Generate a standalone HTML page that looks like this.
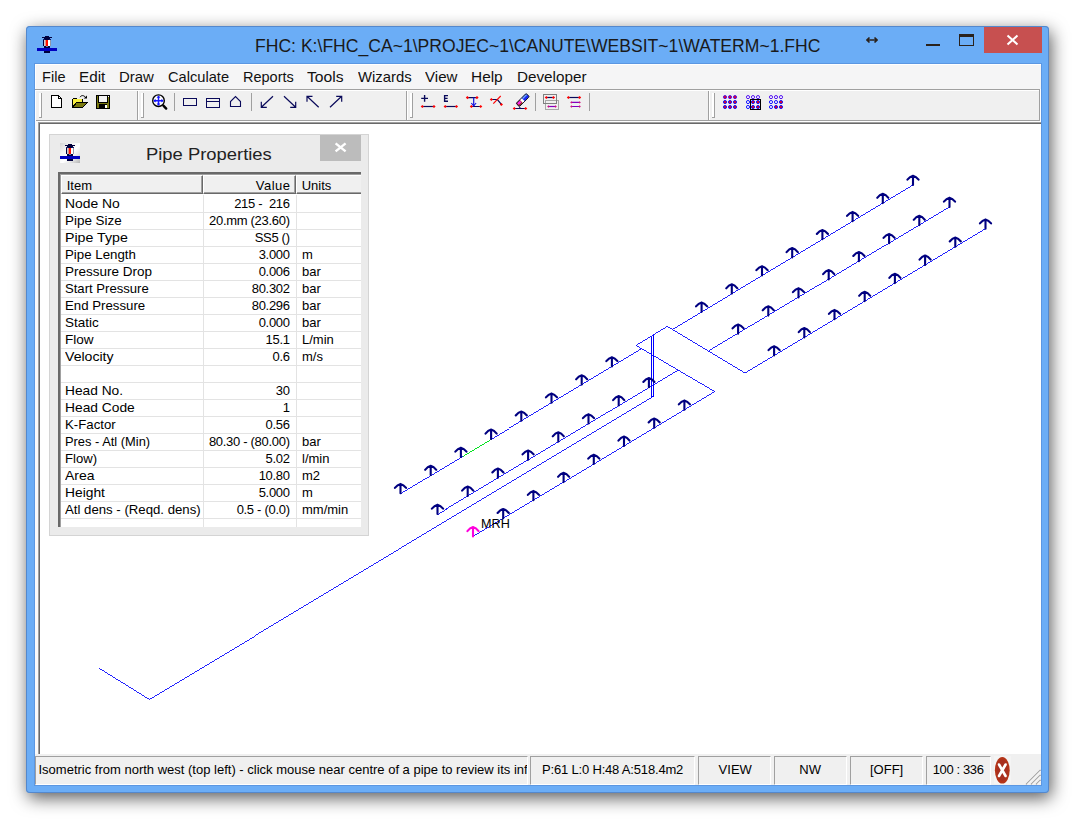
<!DOCTYPE html><html><head><meta charset='utf-8'><title>FHC</title><style>
html,body{margin:0;padding:0;}
body{width:1076px;height:820px;background:#fff;overflow:hidden;position:relative;font-family:"Liberation Sans",sans-serif;}
.a{position:absolute;}
.t{position:absolute;white-space:pre;transform-origin:0 50%;color:#000;}
#win{left:26px;top:26px;width:1023px;height:767px;background:#6BADF6;border-radius:4px;box-shadow:2px 5px 17px 0 rgba(0,0,0,0.65), 0 0 0 1px #5488cc inset;}
.sb{font-size:13px;}
.pan{position:absolute;top:756px;height:29px;border-top:1px solid #a0a0a0;border-left:1px solid #a0a0a0;border-right:1px solid #fff;border-bottom:1px solid #fff;box-sizing:border-box;}
.c{position:absolute;font-size:13px;height:17px;line-height:17px;white-space:pre;color:#000;}
</style></head><body>
<div id='win' class='a'></div><div class='a' style='left:34px;top:63px;width:1008px;height:723px;box-sizing:border-box;border:1px solid #5b97e2'></div>
<svg class='a' style='left:37px;top:36px' width='20' height='17' viewBox='0 0 20 17' shape-rendering='crispEdges'>
<rect x='8' y='0' width='4' height='1' fill='#00003c'/>
<rect x='5' y='1' width='10' height='1' fill='#00003c'/>
<rect x='7' y='2' width='6' height='1' fill='#00003c'/>
<rect x='8' y='3' width='4' height='1' fill='#00003c'/>
<rect x='6' y='3' width='2' height='1' fill='#101868'/><rect x='12' y='3' width='2' height='1' fill='#101868'/>
<rect x='6' y='4' width='1' height='6' fill='#00003c'/>
<rect x='7' y='4' width='1' height='6' fill='#c8ccd8'/>
<rect x='8' y='4' width='1' height='6' fill='#e89080'/>
<rect x='9' y='4' width='2' height='6' fill='#ff1000'/>
<rect x='11' y='4' width='2' height='6' fill='#ffffff'/>
<rect x='13' y='4' width='1' height='6' fill='#9098a8'/>
<rect x='7' y='10' width='6' height='2' fill='#00003c'/>
<rect x='9' y='10' width='2' height='1' fill='#6080c0'/>
<rect x='0' y='12' width='20' height='3' fill='#0000c0'/>
<rect x='7' y='15' width='6' height='2' fill='#00003c'/>
</svg>
<div class='t' style='left:255.3px;top:31px;height:30px;line-height:30px;font-size:17.6px;transform:scaleX(0.999);color:#1a1a1a;'>FHC: K:\FHC_CA~1\PROJEC~1\CANUTE\WEBSIT~1\WATERM~1.FHC</div>
<svg class='a' style='left:866px;top:35px' width='12' height='10' viewBox='0 0 12 10'>
<path d='M1 5H11M3.5 2.5L1 5L3.5 7.5M8.5 2.5L11 5L8.5 7.5' stroke='#2a221c' stroke-width='1.6' fill='none'/></svg>
<div class='a' style='left:926px;top:44px;width:14px;height:2px;background:#2a221c'></div>
<div class='a' style='left:959px;top:34px;width:15px;height:12px;box-sizing:border-box;border:1px solid #2a221c;border-top:3px solid #2a221c'></div>
<div class='a' style='left:984px;top:27px;width:58px;height:26px;background:#C75050'></div>
<svg class='a' style='left:1006px;top:34px' width='13' height='12' viewBox='0 0 13 12'>
<path d='M1.5 1.5L11.5 10.5M11.5 1.5L1.5 10.5' stroke='#fff' stroke-width='2.0' fill='none'/></svg>
<div class='a' style='left:35px;top:64px;width:1006px;height:25px;background:#f5f5f6;box-sizing:border-box;border-left:1px solid #fff;border-top:1px solid #fff'></div>
<div class='t' style='left:41.5px;top:65.3px;height:25px;line-height:25px;font-size:14.6px;transform:scaleX(0.999);color:#111;'>File</div>
<div class='t' style='left:78.6px;top:65.3px;height:25px;line-height:25px;font-size:14.6px;transform:scaleX(1.045);color:#111;'>Edit</div>
<div class='t' style='left:118.8px;top:65.3px;height:25px;line-height:25px;font-size:14.6px;transform:scaleX(1.025);color:#111;'>Draw</div>
<div class='t' style='left:167.6px;top:65.3px;height:25px;line-height:25px;font-size:14.6px;transform:scaleX(1.004);color:#111;'>Calculate</div>
<div class='t' style='left:242.8px;top:65.3px;height:25px;line-height:25px;font-size:14.6px;transform:scaleX(0.994);color:#111;'>Reports</div>
<div class='t' style='left:307.4px;top:65.3px;height:25px;line-height:25px;font-size:14.6px;transform:scaleX(1.074);color:#111;'>Tools</div>
<div class='t' style='left:357.5px;top:65.3px;height:25px;line-height:25px;font-size:14.6px;transform:scaleX(1.019);color:#111;'>Wizards</div>
<div class='t' style='left:424.5px;top:65.3px;height:25px;line-height:25px;font-size:14.6px;transform:scaleX(1.033);color:#111;'>View</div>
<div class='t' style='left:470.5px;top:65.3px;height:25px;line-height:25px;font-size:14.6px;transform:scaleX(1.056);color:#111;'>Help</div>
<div class='t' style='left:516.5px;top:65.3px;height:25px;line-height:25px;font-size:14.6px;transform:scaleX(1.045);color:#111;'>Developer</div>
<div class='a' style='left:35px;top:89px;width:1006px;height:35px;background:#f0f0f0'></div>
<div class='a' style='left:35px;top:89px;width:1006px;height:1px;background:#a0a0a0'></div>
<div class='a' style='left:35px;top:90px;width:1006px;height:1px;background:#fff'></div>
<div class='a' style='left:35px;top:120px;width:1005px;height:1px;background:#a0a0a0'></div>
<div class='a' style='left:35px;top:121px;width:1006px;height:1px;background:#fff'></div>
<div class='a' style='left:35px;top:90px;width:1px;height:31px;background:#fff'></div>
<div class='a' style='left:1039px;top:90px;width:1px;height:31px;background:#a0a0a0'></div>
<div class='a' style='left:1040px;top:89px;width:1px;height:33px;background:#fff'></div>
<div class='a' style='left:39px;top:93px;width:2px;height:24px;background:#fff'></div><div class='a' style='left:41px;top:93px;width:1px;height:25px;background:#a0a0a0'></div><div class='a' style='left:39px;top:117px;width:3px;height:1px;background:#a0a0a0'></div>
<div class='a' style='left:141px;top:93px;width:2px;height:24px;background:#fff'></div><div class='a' style='left:143px;top:93px;width:1px;height:25px;background:#a0a0a0'></div><div class='a' style='left:141px;top:117px;width:3px;height:1px;background:#a0a0a0'></div>
<div class='a' style='left:410px;top:93px;width:2px;height:24px;background:#fff'></div><div class='a' style='left:412px;top:93px;width:1px;height:25px;background:#a0a0a0'></div><div class='a' style='left:410px;top:117px;width:3px;height:1px;background:#a0a0a0'></div>
<div class='a' style='left:712px;top:93px;width:2px;height:24px;background:#fff'></div><div class='a' style='left:714px;top:93px;width:1px;height:25px;background:#a0a0a0'></div><div class='a' style='left:712px;top:117px;width:3px;height:1px;background:#a0a0a0'></div>
<div class='a' style='left:137px;top:91px;width:1px;height:29px;background:#a0a0a0'></div><div class='a' style='left:138px;top:91px;width:1px;height:29px;background:#fff'></div>
<div class='a' style='left:406px;top:91px;width:1px;height:29px;background:#a0a0a0'></div><div class='a' style='left:407px;top:91px;width:1px;height:29px;background:#fff'></div>
<div class='a' style='left:708px;top:91px;width:1px;height:29px;background:#a0a0a0'></div><div class='a' style='left:709px;top:91px;width:1px;height:29px;background:#fff'></div>
<div class='a' style='left:174px;top:93px;width:1px;height:18px;background:#a0a0a0'></div>
<div class='a' style='left:251px;top:93px;width:1px;height:18px;background:#a0a0a0'></div>
<div class='a' style='left:535px;top:93px;width:1px;height:18px;background:#a0a0a0'></div>
<div class='a' style='left:589px;top:93px;width:1px;height:18px;background:#a0a0a0'></div>
<svg class='a' style='left:0;top:0' width='1076' height='125' viewBox='0 0 1076 125'>
<path d='M51.5 95.5H58.5L61.5 98.5V107.5H51.5Z' fill='#fff' stroke='#000' stroke-width='1' shape-rendering='crispEdges'/><path d='M58.5 95.5V98.5H61.5' fill='none' stroke='#000' stroke-width='1' shape-rendering='crispEdges'/>
<g shape-rendering='crispEdges'><path d='M72.5 107.5V99.5L73.5 98.5H76.5L77.5 99.5H82.5V102.5' fill='#f4f060' stroke='#000'/><path d='M73 99H82V102H76L73 107Z' fill='#f8f040'/><path d='M72.5 107.5L76.5 102.5H87.5L82.5 107.5Z' fill='#7a7a10' stroke='#000'/></g><path d='M80 97.2C81.2 95 84 95 85.6 97.6' fill='none' stroke='#000' stroke-width='1'/><path d='M83.6 98.6H87V95.4Z' fill='#000'/>
<g shape-rendering='crispEdges'><rect x='96' y='95' width='14' height='14' fill='#000'/><rect x='97' y='96' width='12' height='12' fill='#7a7a10'/><rect x='99' y='96' width='8' height='6' fill='#f4f4f4'/><rect x='98' y='95' width='1' height='8' fill='#000'/><rect x='107' y='96' width='1' height='7' fill='#000'/><rect x='99' y='102' width='8' height='1' fill='#000'/><rect x='99' y='104' width='8' height='5' fill='#000'/><rect x='105' y='105' width='2' height='3' fill='#fff'/><rect x='108' y='96' width='1' height='1' fill='#fff'/></g>
<circle cx='158.5' cy='100.7' r='5.8' fill='#fff' stroke='#000' stroke-width='1.4'/><path d='M154 100.7H163M158.5 96.2V105.2' stroke='#1818ff' stroke-width='1.5' fill='none'/><path d='M153.4 100.7L155.6 98.8V102.6ZM163.6 100.7L161.4 98.8V102.6ZM158.5 95.6L156.6 97.8H160.4ZM158.5 105.8L156.6 103.6H160.4Z' fill='#1010ff'/><path d='M163.4 105.6L166.2 108.6' stroke='#000' stroke-width='2.4' stroke-linecap='round'/>
<g shape-rendering='crispEdges' fill='none' stroke='#0a0a5a' stroke-width='1'><rect x='183.5' y='98.5' width='13' height='7'/><rect x='206.5' y='98.5' width='13' height='9'/><path d='M206.5 101.5H219.5'/></g><path d='M230.5 106.5V101.6L235.5 96.6L240.5 101.6V106.5Z' fill='none' stroke='#0a0a5a' stroke-width='1.1'/>
<path d='M273 96.3L261.3 107.3M266.8 107.3H261.3V101.8' fill='none' stroke='#0a0a5a' stroke-width='1.2'/>
<path d='M284 96.3L295.7 107.3M290.2 107.3H295.7V101.8' fill='none' stroke='#0a0a5a' stroke-width='1.2'/>
<path d='M318.7 107.3L307 96.3M312.5 96.3H307V101.8' fill='none' stroke='#0a0a5a' stroke-width='1.2'/>
<path d='M330 107.3L341.7 96.3M336.2 96.3H341.7V101.8' fill='none' stroke='#0a0a5a' stroke-width='1.2'/>
<path d='M421.2 98.4H428M424.6 95V101.8' stroke='#0a0a5a' stroke-width='1.4' fill='none'/><path d='M422.4 106.5H434' stroke='#0a0a5a' stroke-width='1.2'/><path d='M420.7 106.5L422.3 104.9L423.90000000000003 106.5L422.3 108.1Z' fill='#ff0000'/><path d='M432.4 106.5L434 104.9L435.6 106.5L434 108.1Z' fill='#ff0000'/>
<path d='M448 95.6H444.6V101.2H448M444.6 98.4H447.6' stroke='#0a0a5a' stroke-width='1.35' fill='none'/><path d='M445.2 106.5H456.4' stroke='#0a0a5a' stroke-width='1.2'/><path d='M443.59999999999997 106.5L445.2 104.9L446.8 106.5L445.2 108.1Z' fill='#ff0000'/><path d='M454.9 106.5L456.5 104.9L458.1 106.5L456.5 108.1Z' fill='#ff0000'/>
<path d='M467.5 97.6H477M471.5 106.5H480.7' stroke='#0a0a5a' stroke-width='1.2'/><path d='M473.7 97.6V106' stroke='#1010e0' stroke-width='1.2'/><path d='M471.3 103L473.7 105.8L476.1 103' stroke='#1010e0' stroke-width='1.1' fill='none'/><path d='M465.79999999999995 97.6L467.4 96.0L469.0 97.6L467.4 99.19999999999999Z' fill='#ff0000'/><path d='M475.4 97.6L477 96.0L478.6 97.6L477 99.19999999999999Z' fill='#ff0000'/><path d='M469.79999999999995 106.5L471.4 104.9L473.0 106.5L471.4 108.1Z' fill='#ff0000'/><path d='M479.09999999999997 106.5L480.7 104.9L482.3 106.5L480.7 108.1Z' fill='#ff0000'/>
<path d='M491.3 99.5H497.4L501.4 104.4' stroke='#0a0a5a' stroke-width='1.2' fill='none'/><path d='M493.3 103.7L500.7 96' stroke='#ff0000' stroke-width='1.1'/><path d='M489.79999999999995 99.5L491.4 97.9L493.0 99.5L491.4 101.1Z' fill='#ff0000'/><path d='M499.79999999999995 104.5L501.4 102.9L503.0 104.5L501.4 106.1Z' fill='#ff0000'/>
<g transform='translate(522.9 99.9) rotate(-45)'><rect x='-7.3' y='-2.3' width='14.2' height='4.6' rx='1' fill='#1828f0'/><rect x='0.8' y='-2.3' width='6.1' height='1.9' fill='#6aa0ff'/><rect x='-7.3' y='-2.3' width='6' height='4.6' rx='1' fill='#a03028'/><rect x='-6.4' y='-1.6' width='3.6' height='2.2' fill='#ff20f0'/><rect x='-2.2' y='-2.3' width='2.6' height='4.6' fill='#fff'/><rect x='-7.3' y='-2.3' width='14.2' height='4.6' rx='1' fill='none' stroke='#101020' stroke-width='0.9'/></g><path d='M514.4 108.5H525.8M519.8 107V108.5' stroke='#0a0a5a' stroke-width='1.2'/><path d='M512.6999999999999 108.5L514.3 106.9L515.9 108.5L514.3 110.1Z' fill='#ff0000'/><path d='M524.1 108.5L525.7 106.9L527.3000000000001 108.5L525.7 110.1Z' fill='#ff0000'/>
<g shape-rendering='crispEdges' fill='none'><rect x='545.5' y='100.5' width='13' height='9' stroke='#a8a8a8'/><rect x='543.5' y='94.5' width='13' height='9' stroke='#808080'/></g><path d='M546.3 97.5H553.5' stroke='#0a0a5a' stroke-width='1.2'/><path d='M544.6999999999999 97.5L546.3 95.9L547.9 97.5L546.3 99.1Z' fill='#ff0000'/><path d='M551.9 97.5L553.5 95.9L555.1 97.5L553.5 99.1Z' fill='#ff0000'/><path d='M548.4 106.5H555.6' stroke='#8000c0' stroke-width='1.2'/><path d='M547.1999999999999 106.5L548.4 105.3L549.6 106.5L548.4 107.7Z' fill='#d01080'/><path d='M554.4 106.5L555.6 105.3L556.8000000000001 106.5L555.6 107.7Z' fill='#d01080'/>
<path d='M568.4 97.5H579.6' stroke='#0a0a5a' stroke-width='1.2'/><path d='M566.8 97.5L568.4 95.9L570.0 97.5L568.4 99.1Z' fill='#ff0000'/><path d='M578.0 97.5L579.6 95.9L581.2 97.5L579.6 99.1Z' fill='#ff0000'/><path d='M571.4 102.4H579.6M571.4 106.5H579.6' stroke='#8000c0' stroke-width='1.2'/><path d='M570.1999999999999 102.4L571.4 101.2L572.6 102.4L571.4 103.60000000000001Z' fill='#d01080'/><path d='M578.4 102.4L579.6 101.2L580.8000000000001 102.4L579.6 103.60000000000001Z' fill='#d01080'/><path d='M570.1999999999999 106.5L571.4 105.3L572.6 106.5L571.4 107.7Z' fill='#d01080'/><path d='M578.4 106.5L579.6 105.3L580.8000000000001 106.5L579.6 107.7Z' fill='#d01080'/>
<circle cx='725' cy='97.10' r='1.55' fill='#f00010' stroke='#5010f0' stroke-width='1'/><circle cx='730' cy='97.10' r='1.55' fill='#f00010' stroke='#5010f0' stroke-width='1'/><circle cx='735' cy='97.10' r='1.55' fill='#f00010' stroke='#5010f0' stroke-width='1'/><circle cx='725' cy='102.05' r='1.55' fill='#f00010' stroke='#1010ff' stroke-width='1'/><circle cx='730' cy='102.05' r='1.55' fill='#f00010' stroke='#1010ff' stroke-width='1'/><circle cx='735' cy='102.05' r='1.55' fill='#f00010' stroke='#1010ff' stroke-width='1'/><circle cx='725' cy='107.00' r='1.55' fill='#f00010' stroke='#1010ff' stroke-width='1'/><circle cx='730' cy='107.00' r='1.55' fill='#f00010' stroke='#1010ff' stroke-width='1'/><circle cx='735' cy='107.00' r='1.55' fill='#f00010' stroke='#1010ff' stroke-width='1'/>
<circle cx='748' cy='97.10' r='1.55' fill='#fff' stroke='#5010f0' stroke-width='1'/><circle cx='753' cy='97.10' r='1.55' fill='#fff' stroke='#5010f0' stroke-width='1'/><circle cx='758' cy='97.10' r='1.55' fill='#fff' stroke='#5010f0' stroke-width='1'/><circle cx='748' cy='102.05' r='1.55' fill='#fff' stroke='#1010ff' stroke-width='1'/><circle cx='753' cy='102.05' r='1.55' fill='#f00010' stroke='#1010ff' stroke-width='1'/><circle cx='758' cy='102.05' r='1.55' fill='#f00010' stroke='#1010ff' stroke-width='1'/><circle cx='748' cy='107.00' r='1.55' fill='#fff' stroke='#1010ff' stroke-width='1'/><circle cx='753' cy='107.00' r='1.55' fill='#f00010' stroke='#1010ff' stroke-width='1'/><circle cx='758' cy='107.00' r='1.55' fill='#f00010' stroke='#1010ff' stroke-width='1'/>
<rect x='750.5' y='99.5' width='10' height='10' fill='none' stroke='#000' stroke-width='1' shape-rendering='crispEdges'/>
<circle cx='771' cy='97.10' r='1.55' fill='#fff' stroke='#5010f0' stroke-width='1'/><circle cx='776' cy='97.10' r='1.55' fill='#fff' stroke='#5010f0' stroke-width='1'/><circle cx='781' cy='97.10' r='1.55' fill='#fff' stroke='#5010f0' stroke-width='1'/><circle cx='771' cy='102.05' r='1.55' fill='#fff' stroke='#1010ff' stroke-width='1'/><circle cx='776' cy='102.05' r='1.55' fill='#fff' stroke='#1010ff' stroke-width='1'/><circle cx='781' cy='102.05' r='1.55' fill='#f00010' stroke='#1010ff' stroke-width='1'/><circle cx='771' cy='107.00' r='1.55' fill='#fff' stroke='#1010ff' stroke-width='1'/><circle cx='776' cy='107.00' r='1.55' fill='#f00010' stroke='#1010ff' stroke-width='1'/><circle cx='781' cy='107.00' r='1.55' fill='#f00010' stroke='#1010ff' stroke-width='1'/>
</svg>
<div class='a' style='left:35px;top:122px;width:1006px;height:633px;background:#f0f0f0'></div>
<div class='a' style='left:38px;top:122px;width:1003px;height:632px;background:#fff;border-left:1px solid #a0a0a0;border-top:1px solid #a0a0a0;box-sizing:border-box'></div>
<div class='a' style='left:39px;top:123px;width:1002px;height:631px;background:#fff;border-left:1px solid #696969;border-top:1px solid #696969;box-sizing:border-box'></div>
<div class='a' style='left:35px;top:121px;width:3px;height:633px;background:#fafafa'></div>
<svg class='a' style='left:0;top:0' width='1076' height='820' viewBox='0 0 1076 820'>
<path d='M667.4 326.4L745.0 373.0M667.4 326.4L636.0 345.4M636.0 345.4L714.8 391.6M672.9 329.2L913.0 185.0M708.8 350.7L949.5 207.0M745.0 373.0L985.5 228.8M641.2 348.9L400.5 493.2M678.3 370.1L437.5 514.0M714.8 391.6L473.0 536.4M651.5 397.5L148.5 699.5M148.5 699.5L98.5 668.5' fill='none' stroke='#0000ff' stroke-width='0.87' shape-rendering='crispEdges'/>
<path d='M651.5 336.6L651.5 397.5M653.5 335.2L653.5 396.0M651.5 397.5L653.5 396.0' fill='none' stroke='#0000ff' stroke-width='1' shape-rendering='crispEdges'/>
<path d='M462.5 456.0L491.1 438.9' stroke='#00ff00' stroke-width='0.87' shape-rendering='crispEdges'/>
<path d='M913.0 185.0V176.2M907.4 179.7Q910.0 176.4 913.0 175.7Q916.0 176.4 918.6 179.7' fill='none' stroke='#000080' stroke-width='2.1' stroke-linecap='round' stroke-linejoin='miter'/><path d='M882.8 203.1V194.3M877.2 197.8Q879.8 194.5 882.8 193.8Q885.8 194.5 888.4 197.8' fill='none' stroke='#000080' stroke-width='2.1' stroke-linecap='round' stroke-linejoin='miter'/><path d='M852.6 221.2V212.4M847.0 215.9Q849.6 212.6 852.6 211.9Q855.6 212.6 858.2 215.9' fill='none' stroke='#000080' stroke-width='2.1' stroke-linecap='round' stroke-linejoin='miter'/><path d='M822.4 239.3V230.5M816.8 234.0Q819.4 230.7 822.4 230.0Q825.4 230.7 828.0 234.0' fill='none' stroke='#000080' stroke-width='2.1' stroke-linecap='round' stroke-linejoin='miter'/><path d='M792.2 257.4V248.6M786.6 252.1Q789.2 248.8 792.2 248.1Q795.2 248.8 797.8 252.1' fill='none' stroke='#000080' stroke-width='2.1' stroke-linecap='round' stroke-linejoin='miter'/><path d='M762.0 275.5V266.7M756.4 270.2Q759.0 266.9 762.0 266.2Q765.0 266.9 767.6 270.2' fill='none' stroke='#000080' stroke-width='2.1' stroke-linecap='round' stroke-linejoin='miter'/><path d='M731.8 293.6V284.8M726.2 288.3Q728.8 285.0 731.8 284.3Q734.8 285.0 737.4 288.3' fill='none' stroke='#000080' stroke-width='2.1' stroke-linecap='round' stroke-linejoin='miter'/><path d='M701.6 311.7V302.9M696.0 306.4Q698.6 303.1 701.6 302.4Q704.6 303.1 707.2 306.4' fill='none' stroke='#000080' stroke-width='2.1' stroke-linecap='round' stroke-linejoin='miter'/><path d='M949.5 207.0V198.2M943.9 201.7Q946.5 198.4 949.5 197.7Q952.5 198.4 955.1 201.7' fill='none' stroke='#000080' stroke-width='2.1' stroke-linecap='round' stroke-linejoin='miter'/><path d='M919.3 225.1V216.3M913.7 219.8Q916.3 216.5 919.3 215.8Q922.3 216.5 924.9 219.8' fill='none' stroke='#000080' stroke-width='2.1' stroke-linecap='round' stroke-linejoin='miter'/><path d='M889.1 243.2V234.4M883.5 237.9Q886.1 234.6 889.1 233.9Q892.1 234.6 894.7 237.9' fill='none' stroke='#000080' stroke-width='2.1' stroke-linecap='round' stroke-linejoin='miter'/><path d='M858.9 261.3V252.5M853.3 256.0Q855.9 252.7 858.9 252.0Q861.9 252.7 864.5 256.0' fill='none' stroke='#000080' stroke-width='2.1' stroke-linecap='round' stroke-linejoin='miter'/><path d='M828.7 279.4V270.6M823.1 274.1Q825.7 270.8 828.7 270.1Q831.7 270.8 834.3 274.1' fill='none' stroke='#000080' stroke-width='2.1' stroke-linecap='round' stroke-linejoin='miter'/><path d='M798.5 297.5V288.7M792.9 292.2Q795.5 288.9 798.5 288.2Q801.5 288.9 804.1 292.2' fill='none' stroke='#000080' stroke-width='2.1' stroke-linecap='round' stroke-linejoin='miter'/><path d='M768.3 315.6V306.8M762.7 310.3Q765.3 307.0 768.3 306.3Q771.3 307.0 773.9 310.3' fill='none' stroke='#000080' stroke-width='2.1' stroke-linecap='round' stroke-linejoin='miter'/><path d='M738.1 333.7V324.9M732.5 328.4Q735.1 325.1 738.1 324.4Q741.1 325.1 743.7 328.4' fill='none' stroke='#000080' stroke-width='2.1' stroke-linecap='round' stroke-linejoin='miter'/><path d='M985.5 228.8V219.9M979.9 223.4Q982.5 220.2 985.5 219.4Q988.5 220.2 991.1 223.4' fill='none' stroke='#000080' stroke-width='2.1' stroke-linecap='round' stroke-linejoin='miter'/><path d='M955.3 246.8V238.0M949.7 241.5Q952.3 238.2 955.3 237.5Q958.3 238.2 960.9 241.5' fill='none' stroke='#000080' stroke-width='2.1' stroke-linecap='round' stroke-linejoin='miter'/><path d='M925.1 264.9V256.1M919.5 259.6Q922.1 256.3 925.1 255.6Q928.1 256.3 930.7 259.6' fill='none' stroke='#000080' stroke-width='2.1' stroke-linecap='round' stroke-linejoin='miter'/><path d='M894.9 283.1V274.2M889.3 277.8Q891.9 274.4 894.9 273.8Q897.9 274.4 900.5 277.8' fill='none' stroke='#000080' stroke-width='2.1' stroke-linecap='round' stroke-linejoin='miter'/><path d='M864.7 301.1V292.3M859.1 295.8Q861.7 292.5 864.7 291.8Q867.7 292.5 870.3 295.8' fill='none' stroke='#000080' stroke-width='2.1' stroke-linecap='round' stroke-linejoin='miter'/><path d='M834.5 319.2V310.4M828.9 313.9Q831.5 310.6 834.5 309.9Q837.5 310.6 840.1 313.9' fill='none' stroke='#000080' stroke-width='2.1' stroke-linecap='round' stroke-linejoin='miter'/><path d='M804.3 337.4V328.6M798.7 332.1Q801.3 328.8 804.3 328.1Q807.3 328.8 809.9 332.1' fill='none' stroke='#000080' stroke-width='2.1' stroke-linecap='round' stroke-linejoin='miter'/><path d='M774.1 355.5V346.7M768.5 350.2Q771.1 346.9 774.1 346.2Q777.1 346.9 779.7 350.2' fill='none' stroke='#000080' stroke-width='2.1' stroke-linecap='round' stroke-linejoin='miter'/><path d='M400.5 493.2V484.4M394.9 487.9Q397.5 484.6 400.5 483.9Q403.5 484.6 406.1 487.9' fill='none' stroke='#000080' stroke-width='2.1' stroke-linecap='round' stroke-linejoin='miter'/><path d='M430.7 475.1V466.3M425.1 469.8Q427.7 466.5 430.7 465.8Q433.7 466.5 436.3 469.8' fill='none' stroke='#000080' stroke-width='2.1' stroke-linecap='round' stroke-linejoin='miter'/><path d='M460.9 457.0V448.2M455.3 451.7Q457.9 448.4 460.9 447.7Q463.9 448.4 466.5 451.7' fill='none' stroke='#000080' stroke-width='2.1' stroke-linecap='round' stroke-linejoin='miter'/><path d='M491.1 438.9V430.1M485.5 433.6Q488.1 430.3 491.1 429.6Q494.1 430.3 496.7 433.6' fill='none' stroke='#000080' stroke-width='2.1' stroke-linecap='round' stroke-linejoin='miter'/><path d='M521.3 420.8V412.0M515.7 415.5Q518.3 412.2 521.3 411.5Q524.3 412.2 526.9 415.5' fill='none' stroke='#000080' stroke-width='2.1' stroke-linecap='round' stroke-linejoin='miter'/><path d='M551.5 402.7V393.9M545.9 397.4Q548.5 394.1 551.5 393.4Q554.5 394.1 557.1 397.4' fill='none' stroke='#000080' stroke-width='2.1' stroke-linecap='round' stroke-linejoin='miter'/><path d='M581.7 384.6V375.8M576.1 379.3Q578.7 376.0 581.7 375.3Q584.7 376.0 587.3 379.3' fill='none' stroke='#000080' stroke-width='2.1' stroke-linecap='round' stroke-linejoin='miter'/><path d='M611.9 366.5V357.7M606.3 361.2Q608.9 357.9 611.9 357.2Q614.9 357.9 617.5 361.2' fill='none' stroke='#000080' stroke-width='2.1' stroke-linecap='round' stroke-linejoin='miter'/><path d='M437.5 514.0V505.2M431.9 508.7Q434.5 505.4 437.5 504.7Q440.5 505.4 443.1 508.7' fill='none' stroke='#000080' stroke-width='2.1' stroke-linecap='round' stroke-linejoin='miter'/><path d='M467.7 495.9V487.1M462.1 490.6Q464.7 487.3 467.7 486.6Q470.7 487.3 473.3 490.6' fill='none' stroke='#000080' stroke-width='2.1' stroke-linecap='round' stroke-linejoin='miter'/><path d='M497.9 477.8V469.0M492.3 472.5Q494.9 469.2 497.9 468.5Q500.9 469.2 503.5 472.5' fill='none' stroke='#000080' stroke-width='2.1' stroke-linecap='round' stroke-linejoin='miter'/><path d='M528.1 459.7V450.9M522.5 454.4Q525.1 451.1 528.1 450.4Q531.1 451.1 533.7 454.4' fill='none' stroke='#000080' stroke-width='2.1' stroke-linecap='round' stroke-linejoin='miter'/><path d='M558.3 441.6V432.8M552.7 436.3Q555.3 433.0 558.3 432.3Q561.3 433.0 563.9 436.3' fill='none' stroke='#000080' stroke-width='2.1' stroke-linecap='round' stroke-linejoin='miter'/><path d='M588.5 423.5V414.7M582.9 418.2Q585.5 414.9 588.5 414.2Q591.5 414.9 594.1 418.2' fill='none' stroke='#000080' stroke-width='2.1' stroke-linecap='round' stroke-linejoin='miter'/><path d='M618.7 405.4V396.6M613.1 400.1Q615.7 396.8 618.7 396.1Q621.7 396.8 624.3 400.1' fill='none' stroke='#000080' stroke-width='2.1' stroke-linecap='round' stroke-linejoin='miter'/><path d='M648.9 387.3V378.5M643.3 382.0Q645.9 378.7 648.9 378.0Q651.9 378.7 654.5 382.0' fill='none' stroke='#000080' stroke-width='2.1' stroke-linecap='round' stroke-linejoin='miter'/><path d='M473.0 536.4V527.6M467.4 531.1Q470.0 527.8 473.0 527.1Q476.0 527.8 478.6 531.1' fill='none' stroke='#ff00dc' stroke-width='2.1' stroke-linecap='round' stroke-linejoin='miter'/><path d='M503.2 518.3V509.5M497.6 513.0Q500.2 509.7 503.2 509.0Q506.2 509.7 508.8 513.0' fill='none' stroke='#000080' stroke-width='2.1' stroke-linecap='round' stroke-linejoin='miter'/><path d='M533.4 500.2V491.4M527.8 494.9Q530.4 491.6 533.4 490.9Q536.4 491.6 539.0 494.9' fill='none' stroke='#000080' stroke-width='2.1' stroke-linecap='round' stroke-linejoin='miter'/><path d='M563.6 482.1V473.3M558.0 476.8Q560.6 473.5 563.6 472.8Q566.6 473.5 569.2 476.8' fill='none' stroke='#000080' stroke-width='2.1' stroke-linecap='round' stroke-linejoin='miter'/><path d='M593.8 464.0V455.2M588.2 458.7Q590.8 455.4 593.8 454.7Q596.8 455.4 599.4 458.7' fill='none' stroke='#000080' stroke-width='2.1' stroke-linecap='round' stroke-linejoin='miter'/><path d='M624.0 445.9V437.1M618.4 440.6Q621.0 437.3 624.0 436.6Q627.0 437.3 629.6 440.6' fill='none' stroke='#000080' stroke-width='2.1' stroke-linecap='round' stroke-linejoin='miter'/><path d='M654.2 427.8V419.0M648.6 422.5Q651.2 419.2 654.2 418.5Q657.2 419.2 659.8 422.5' fill='none' stroke='#000080' stroke-width='2.1' stroke-linecap='round' stroke-linejoin='miter'/><path d='M684.4 409.7V400.9M678.8 404.4Q681.4 401.1 684.4 400.4Q687.4 401.1 690.0 404.4' fill='none' stroke='#000080' stroke-width='2.1' stroke-linecap='round' stroke-linejoin='miter'/>
</svg>
<div class='t' style='left:481px;top:516.1px;height:16px;line-height:16px;font-size:13.6px;transform:scaleX(0.93)'>MRH</div>
<div class='a' style='left:49px;top:134px;width:320px;height:402px;background:#ebebeb;border:1px solid #d4d4d4;box-sizing:border-box'></div>
<div class='a' style='left:60px;top:143px;width:20px;height:20px;background:linear-gradient(135deg,#d4d4d4 0%,#f4f4f4 30%,#ffffff 55%,#e4e4e4 75%,#b4b4b4 100%)'></div>
<svg class='a' style='left:60px;top:144px' width='20' height='17' viewBox='0 0 20 17' shape-rendering='crispEdges'>
<rect x='8' y='0' width='4' height='1' fill='#00003c'/>
<rect x='5' y='1' width='10' height='1' fill='#00003c'/>
<rect x='7' y='2' width='6' height='1' fill='#00003c'/>
<rect x='8' y='3' width='4' height='1' fill='#00003c'/>
<rect x='6' y='3' width='2' height='1' fill='#101868'/><rect x='12' y='3' width='2' height='1' fill='#101868'/>
<rect x='6' y='4' width='1' height='6' fill='#00003c'/>
<rect x='7' y='4' width='1' height='6' fill='#c8ccd8'/>
<rect x='8' y='4' width='1' height='6' fill='#e89080'/>
<rect x='9' y='4' width='2' height='6' fill='#ff1000'/>
<rect x='11' y='4' width='2' height='6' fill='#ffffff'/>
<rect x='13' y='4' width='1' height='6' fill='#9098a8'/>
<rect x='7' y='10' width='6' height='2' fill='#00003c'/>
<rect x='9' y='10' width='2' height='1' fill='#6080c0'/>
<rect x='0' y='12' width='20' height='3' fill='#0000c0'/>
<rect x='7' y='15' width='6' height='2' fill='#00003c'/>
</svg>
<div class='t' id='pp' style='left:146.2px;top:140px;height:28px;line-height:28px;font-size:17.4px;color:#222;transform:scaleX(1.058)'>Pipe Properties</div>
<div class='a' style='left:320px;top:135px;width:41px;height:26px;background:#bcbcbc'></div>
<svg class='a' style='left:334px;top:142px' width='13' height='11' viewBox='0 0 13 11'><path d='M1.6 1.4L11.6 9.4M11.6 1.4L1.6 9.4' stroke='#fff' stroke-width='2.4' fill='none'/></svg>
<div class='a' style='left:58px;top:172px;width:303px;height:355px;background:#fff'></div>
<div class='a' style='left:58px;top:172px;width:303px;height:2px;background:#696969'></div>
<div class='a' style='left:58px;top:172px;width:2px;height:355px;background:#696969'></div>
<div class='a' style='left:60px;top:174px;width:301px;height:1px;background:#a0a0a0'></div>
<div class='a' style='left:60px;top:174px;width:1px;height:353px;background:#a0a0a0'></div>
<div class='a' style='left:61px;top:175px;width:142px;height:19px;box-sizing:border-box;background:#f0f0f0;border-top:1px solid #fff;border-left:1px solid #fff;border-right:1px solid #696969;border-bottom:1px solid #696969;font-size:13px;line-height:19px;text-align:left;padding-left:4.7px;white-space:pre;color:#000'>Item</div><div class='a' style='left:62px;top:192px;width:140px;height:1px;background:#a0a0a0'></div><div class='a' style='left:201px;top:176px;width:1px;height:17px;background:#a0a0a0'></div>
<div class='a' style='left:203px;top:175px;width:93px;height:19px;box-sizing:border-box;background:#f0f0f0;border-top:1px solid #fff;border-left:1px solid #fff;border-right:1px solid #696969;border-bottom:1px solid #696969;font-size:13px;line-height:19px;text-align:right;padding-right:4.5px;letter-spacing:0.5px;white-space:pre;color:#000'>Value</div><div class='a' style='left:204px;top:192px;width:91px;height:1px;background:#a0a0a0'></div><div class='a' style='left:294px;top:176px;width:1px;height:17px;background:#a0a0a0'></div>
<div class='a' style='left:296px;top:175px;width:65px;height:19px;overflow:hidden'><div class='a' style='left:0px;top:0px;width:80px;height:19px;box-sizing:border-box;background:#f0f0f0;border-top:1px solid #fff;border-left:1px solid #fff;border-right:1px solid #696969;border-bottom:1px solid #696969;font-size:13px;line-height:19px;text-align:left;padding-left:4.7px;white-space:pre;color:#000'>Units</div><div class='a' style='left:1px;top:17px;width:78px;height:1px;background:#a0a0a0'></div><div class='a' style='left:78px;top:1px;width:1px;height:17px;background:#a0a0a0'></div></div>
<div class='a' style='left:61px;top:212px;width:300px;height:1px;background:#e3e3e3'></div>
<div class='a' style='left:61px;top:229px;width:300px;height:1px;background:#e3e3e3'></div>
<div class='a' style='left:61px;top:246px;width:300px;height:1px;background:#e3e3e3'></div>
<div class='a' style='left:61px;top:263px;width:300px;height:1px;background:#e3e3e3'></div>
<div class='a' style='left:61px;top:280px;width:300px;height:1px;background:#e3e3e3'></div>
<div class='a' style='left:61px;top:297px;width:300px;height:1px;background:#e3e3e3'></div>
<div class='a' style='left:61px;top:314px;width:300px;height:1px;background:#e3e3e3'></div>
<div class='a' style='left:61px;top:331px;width:300px;height:1px;background:#e3e3e3'></div>
<div class='a' style='left:61px;top:348px;width:300px;height:1px;background:#e3e3e3'></div>
<div class='a' style='left:61px;top:365px;width:300px;height:1px;background:#e3e3e3'></div>
<div class='a' style='left:61px;top:382px;width:300px;height:1px;background:#e3e3e3'></div>
<div class='a' style='left:61px;top:399px;width:300px;height:1px;background:#e3e3e3'></div>
<div class='a' style='left:61px;top:416px;width:300px;height:1px;background:#e3e3e3'></div>
<div class='a' style='left:61px;top:433px;width:300px;height:1px;background:#e3e3e3'></div>
<div class='a' style='left:61px;top:450px;width:300px;height:1px;background:#e3e3e3'></div>
<div class='a' style='left:61px;top:467px;width:300px;height:1px;background:#e3e3e3'></div>
<div class='a' style='left:61px;top:484px;width:300px;height:1px;background:#e3e3e3'></div>
<div class='a' style='left:61px;top:501px;width:300px;height:1px;background:#e3e3e3'></div>
<div class='a' style='left:61px;top:518px;width:300px;height:1px;background:#e3e3e3'></div>
<div class='a' style='left:203px;top:195px;width:1px;height:332px;background:#e3e3e3'></div>
<div class='a' style='left:296px;top:195px;width:1px;height:332px;background:#e3e3e3'></div>
<div class='c' style='left:64.7px;top:195px;transform-origin:0 50%;transform:scaleX(1.0689)'>Node No</div>
<div class='c' style='left:203px;width:86.7px;text-align:right;top:195px;letter-spacing:-0.3px'>215 -  216</div>
<div class='c' style='left:64.7px;top:212px;transform-origin:0 50%;transform:scaleX(1.0316)'>Pipe Size</div>
<div class='c' style='left:203px;width:86.7px;text-align:right;top:212px;letter-spacing:-0.3px'>20.mm (23.60)</div>
<div class='c' style='left:64.7px;top:229px;transform-origin:0 50%;transform:scaleX(1.0921)'>Pipe Type</div>
<div class='c' style='left:203px;width:86.7px;text-align:right;top:229px;letter-spacing:-0.3px'>SS5 ()</div>
<div class='c' style='left:64.7px;top:246px;transform-origin:0 50%;transform:scaleX(1.0215)'>Pipe Length</div>
<div class='c' style='left:203px;width:86.7px;text-align:right;top:246px;letter-spacing:-0.3px'>3.000</div>
<div class='c' style='left:302px;top:246px'>m</div>
<div class='c' style='left:64.7px;top:263px;transform-origin:0 50%;transform:scaleX(1.0368)'>Pressure Drop</div>
<div class='c' style='left:203px;width:86.7px;text-align:right;top:263px;letter-spacing:-0.3px'>0.006</div>
<div class='c' style='left:302px;top:263px'>bar</div>
<div class='c' style='left:64.7px;top:280px;transform-origin:0 50%;transform:scaleX(1.0073)'>Start Pressure</div>
<div class='c' style='left:203px;width:86.7px;text-align:right;top:280px;letter-spacing:-0.3px'>80.302</div>
<div class='c' style='left:302px;top:280px'>bar</div>
<div class='c' style='left:64.7px;top:297px;transform-origin:0 50%;transform:scaleX(1.0182)'>End Pressure</div>
<div class='c' style='left:203px;width:86.7px;text-align:right;top:297px;letter-spacing:-0.3px'>80.296</div>
<div class='c' style='left:302px;top:297px'>bar</div>
<div class='c' style='left:64.7px;top:314px;transform-origin:0 50%;transform:scaleX(1.0352)'>Static</div>
<div class='c' style='left:203px;width:86.7px;text-align:right;top:314px;letter-spacing:-0.3px'>0.000</div>
<div class='c' style='left:302px;top:314px'>bar</div>
<div class='c' style='left:64.7px;top:331px;transform-origin:0 50%;transform:scaleX(1.0432)'>Flow</div>
<div class='c' style='left:203px;width:86.7px;text-align:right;top:331px;letter-spacing:-0.3px'>15.1</div>
<div class='c' style='left:302px;top:331px'>L/min</div>
<div class='c' style='left:64.7px;top:348px;transform-origin:0 50%;transform:scaleX(1.0845)'>Velocity</div>
<div class='c' style='left:203px;width:86.7px;text-align:right;top:348px;letter-spacing:-0.3px'>0.6</div>
<div class='c' style='left:302px;top:348px'>m/s</div>
<div class='c' style='left:64.7px;top:382px;transform-origin:0 50%;transform:scaleX(1.0571)'>Head No.</div>
<div class='c' style='left:203px;width:86.7px;text-align:right;top:382px;letter-spacing:-0.3px'>30</div>
<div class='c' style='left:64.7px;top:399px;transform-origin:0 50%;transform:scaleX(1.0606)'>Head Code</div>
<div class='c' style='left:203px;width:86.7px;text-align:right;top:399px;letter-spacing:-0.3px'>1</div>
<div class='c' style='left:64.7px;top:416px;transform-origin:0 50%;transform:scaleX(1.0166)'>K-Factor</div>
<div class='c' style='left:203px;width:86.7px;text-align:right;top:416px;letter-spacing:-0.3px'>0.56</div>
<div class='c' style='left:64.7px;top:433px;transform-origin:0 50%;transform:scaleX(0.9899)'>Pres - Atl (Min)</div>
<div class='c' style='left:203px;width:86.7px;text-align:right;top:433px;letter-spacing:-0.3px'>80.30 - (80.00)</div>
<div class='c' style='left:302px;top:433px'>bar</div>
<div class='c' style='left:64.7px;top:450px;transform-origin:0 50%;transform:scaleX(1.0100)'>Flow)</div>
<div class='c' style='left:203px;width:86.7px;text-align:right;top:450px;letter-spacing:-0.3px'>5.02</div>
<div class='c' style='left:302px;top:450px'>l/min</div>
<div class='c' style='left:64.7px;top:467px;transform-origin:0 50%;transform:scaleX(1.0739)'>Area</div>
<div class='c' style='left:203px;width:86.7px;text-align:right;top:467px;letter-spacing:-0.3px'>10.80</div>
<div class='c' style='left:302px;top:467px'>m2</div>
<div class='c' style='left:64.7px;top:484px;transform-origin:0 50%;transform:scaleX(1.0618)'>Height</div>
<div class='c' style='left:203px;width:86.7px;text-align:right;top:484px;letter-spacing:-0.3px'>5.000</div>
<div class='c' style='left:302px;top:484px'>m</div>
<div class='c' style='left:64.7px;top:501px;transform-origin:0 50%;transform:scaleX(1.0151)'>Atl dens - (Reqd. dens)</div>
<div class='c' style='left:203px;width:86.7px;text-align:right;top:501px;letter-spacing:-0.3px'>0.5 - (0.0)</div>
<div class='c' style='left:302px;top:501px'>mm/min</div>
<div class='a' style='left:35px;top:754px;width:1006px;height:31px;background:#f0f0f0'></div>
<div class='pan' style='left:35px;width:493px'></div>
<div class='pan' style='left:530px;width:165px'></div>
<div class='pan' style='left:698px;width:73px'></div>
<div class='pan' style='left:774px;width:73px'></div>
<div class='pan' style='left:850px;width:73px'></div>
<div class='pan' style='left:926px;width:65px'></div>
<div class='a' style='left:37px;top:757px;width:490px;height:26px;overflow:hidden'><div class='t sb' style='left:1.5px;top:0px;height:26px;line-height:26px'>Isometric from north west (top left) - click mouse near centre of a pipe to review its information</div></div>
<div class='t sb' style='left:542px;top:757px;height:26px;line-height:26px;letter-spacing:-0.18px'>P:61 L:0 H:48 A:518.4m2</div>
<div class='t sb' style='left:718.6px;top:757px;height:26px;line-height:26px;letter-spacing:0px'>VIEW</div>
<div class='t sb' style='left:799.3px;top:757px;height:26px;line-height:26px;letter-spacing:0px'>NW</div>
<div class='t sb' style='left:870px;top:757px;height:26px;line-height:26px;letter-spacing:0px'>[OFF]</div>
<div class='t sb' style='left:932.7px;top:757px;height:26px;line-height:26px;letter-spacing:-0.38px'>100 : 336</div>
<svg class='a' style='left:994px;top:756px' width='17' height='28' viewBox='0 0 17 28'>
<rect x='0' y='0' width='17' height='28' fill='#f4f4f4'/>
<ellipse cx='8.3' cy='14.3' rx='7.4' ry='13.2' fill='#b43418'/>
<ellipse cx='8.3' cy='14.3' rx='5.6' ry='11' fill='#a83020'/>
<path d='M5 8.5L11.6 20M11.6 8.5L5 20' stroke='#fff' stroke-width='2.6' stroke-linecap='round'/>
</svg>
<svg class='a' style='left:1025px;top:769px' width='16' height='16' viewBox='0 0 16 16'>
<path d='M1 15.5L15.5 1M6 15.5L15.5 6M11 15.5L15.5 11' stroke='#9c9c9c' stroke-width='1.1'/>
<path d='M2 15.5L15.5 2M7 15.5L15.5 7M12 15.5L15.5 12' stroke='#fff' stroke-width='1'/></svg>
</body></html>
